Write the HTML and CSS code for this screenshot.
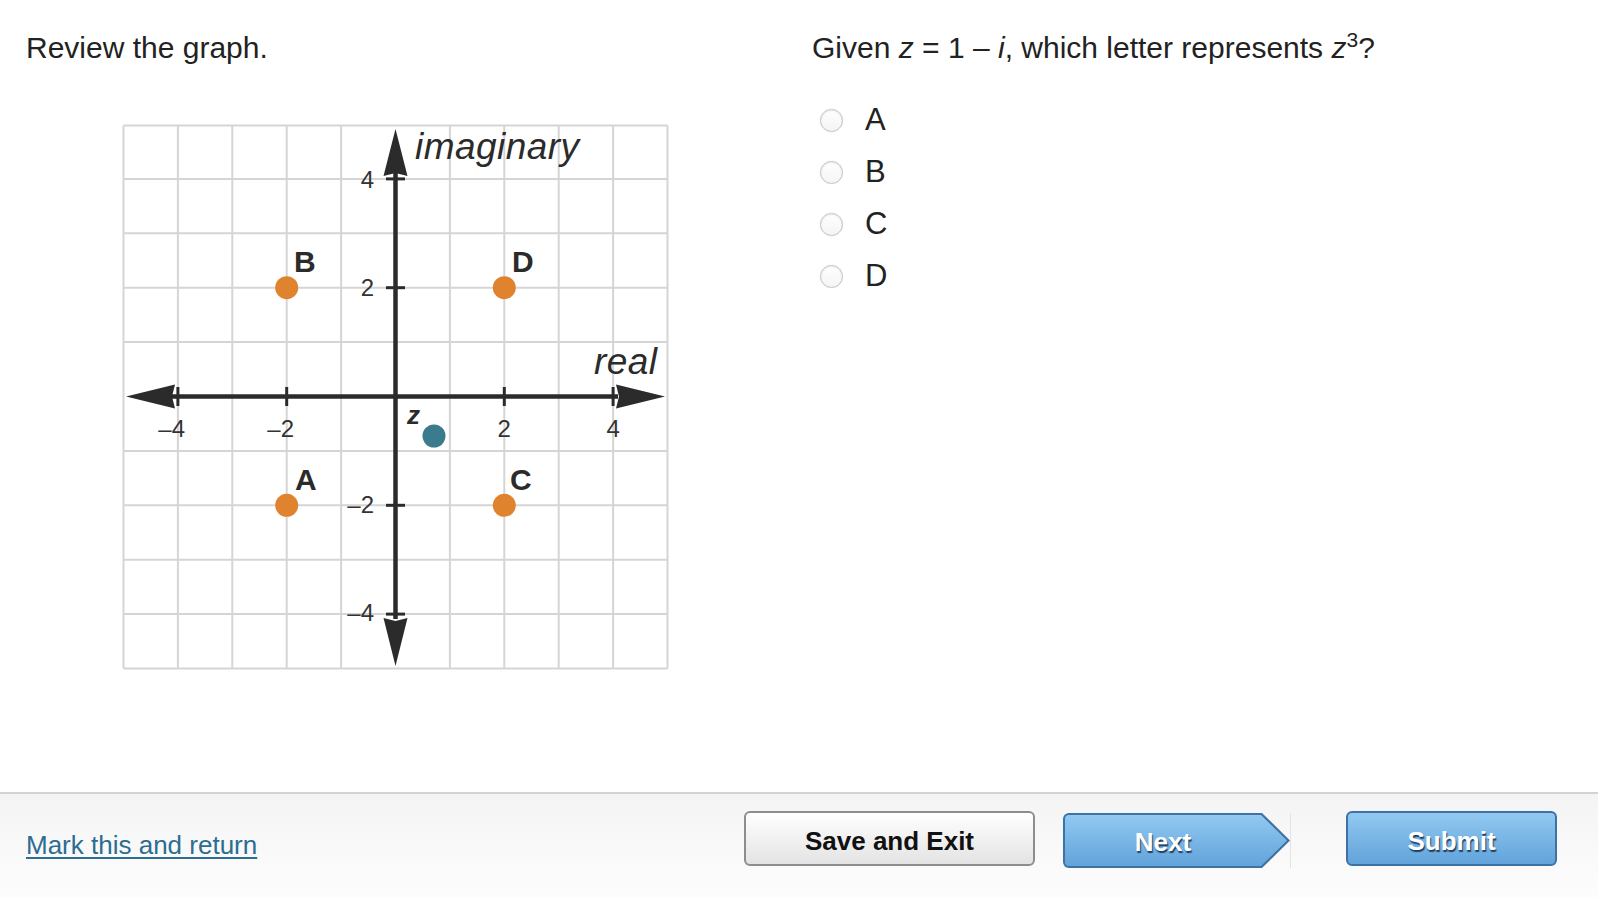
FILE: index.html
```html
<!DOCTYPE html>
<html lang="en">
<head>
<meta charset="utf-8">
<title>Review the graph</title>
<link rel="stylesheet" href="styles.css">
</head>
<body>
<div class="page">
  <main class="content">
    <section class="left">
      <p class="prompt">Review the graph.</p>
      <div class="graph">
        <svg class="graph-svg" width="548" height="548" viewBox="0 0 548 548" xmlns="http://www.w3.org/2000/svg">
          <g class="grid" stroke="#d5d5d5" stroke-width="2" fill="none">
            <line x1="1.5" y1="2.5" x2="1.5" y2="545.5"/>
            <line x1="55.9" y1="2.5" x2="55.9" y2="545.5"/>
            <line x1="110.3" y1="2.5" x2="110.3" y2="545.5"/>
            <line x1="164.7" y1="2.5" x2="164.7" y2="545.5"/>
            <line x1="219.1" y1="2.5" x2="219.1" y2="545.5"/>
            <line x1="327.9" y1="2.5" x2="327.9" y2="545.5"/>
            <line x1="382.3" y1="2.5" x2="382.3" y2="545.5"/>
            <line x1="436.7" y1="2.5" x2="436.7" y2="545.5"/>
            <line x1="491.1" y1="2.5" x2="491.1" y2="545.5"/>
            <line x1="545.5" y1="2.5" x2="545.5" y2="545.5"/>
            <line y1="2.5" x1="1.5" y2="2.5" x2="545.5"/>
            <line y1="55.9" x1="1.5" y2="55.9" x2="545.5"/>
            <line y1="110.3" x1="1.5" y2="110.3" x2="545.5"/>
            <line y1="164.7" x1="1.5" y2="164.7" x2="545.5"/>
            <line y1="219.1" x1="1.5" y2="219.1" x2="545.5"/>
            <line y1="327.9" x1="1.5" y2="327.9" x2="545.5"/>
            <line y1="382.3" x1="1.5" y2="382.3" x2="545.5"/>
            <line y1="436.7" x1="1.5" y2="436.7" x2="545.5"/>
            <line y1="491.1" x1="1.5" y2="491.1" x2="545.5"/>
            <line y1="545.5" x1="1.5" y2="545.5" x2="545.5"/>
          </g>
          <g class="axes" stroke="#2b2b2b" fill="#2b2b2b">
            <line x1="50" y1="273.5" x2="496" y2="273.5" stroke-width="4.5"/>
            <line x1="273.5" y1="50" x2="273.5" y2="496" stroke-width="4.5"/>
            <polygon stroke="none" points="4,273.5 53,261.5 50,273.5 53,285.5"/>
            <polygon stroke="none" points="543,273.5 494,261.5 497,273.5 494,285.5"/>
            <polygon stroke="none" points="273.5,6 261.5,53 273.5,50 285.5,53"/>
            <polygon stroke="none" points="273.5,543 261.5,495 273.5,498 285.5,495"/>
            <g stroke-width="3">
              <line x1="55.9" y1="264" x2="55.9" y2="283"/>
              <line x1="164.7" y1="264" x2="164.7" y2="283"/>
              <line x1="382.3" y1="264" x2="382.3" y2="283"/>
              <line x1="491.1" y1="264" x2="491.1" y2="283"/>
              <line y1="55.9" x1="264" y2="55.9" x2="283"/>
              <line y1="164.7" x1="264" y2="164.7" x2="283"/>
              <line y1="382.3" x1="264" y2="382.3" x2="283"/>
              <line y1="491.1" x1="264" y2="491.1" x2="283"/>
            </g>
          </g>
          <g class="ticks" fill="#333" font-family="Liberation Sans, Arial, sans-serif" font-size="24">
            <text x="63" y="314" text-anchor="end">–4</text>
            <text x="172" y="314" text-anchor="end">–2</text>
            <text x="382.3" y="314" text-anchor="middle">2</text>
            <text x="491.1" y="314" text-anchor="middle">4</text>
            <text x="252" y="65" text-anchor="end">4</text>
            <text x="252" y="173" text-anchor="end">2</text>
            <text x="252" y="390" text-anchor="end">–2</text>
            <text x="252" y="498" text-anchor="end">–4</text>
          </g>
          <g class="axis-names" fill="#2b2b2b" font-family="Liberation Sans, Arial, sans-serif" font-style="italic" font-size="37">
            <text x="293" y="36" textLength="164">imaginary</text>
            <text x="472" y="251" textLength="63">real</text>
          </g>
          <g class="points">
            <circle cx="164.7" cy="164.7" r="11.5" fill="#e0832f"/>
            <circle cx="382.3" cy="164.7" r="11.5" fill="#e0832f"/>
            <circle cx="164.7" cy="382.3" r="11.5" fill="#e0832f"/>
            <circle cx="382.3" cy="382.3" r="11.5" fill="#e0832f"/>
            <circle cx="312" cy="313" r="11.5" fill="#3b7b8e"/>
          </g>
          <g class="point-names" fill="#2b2b2b" font-family="Liberation Sans, Arial, sans-serif" font-weight="bold" font-size="30">
            <text x="172" y="149">B</text>
            <text x="390" y="149">D</text>
            <text x="173" y="367">A</text>
            <text x="388" y="367">C</text>
            <text x="285" y="301" font-style="italic" font-size="26">z</text>
          </g>
        </svg>
      </div>
    </section>
    <section class="right">
      <p class="question">Given <i>z</i> = 1 – <i>i</i>, which letter represents <i>z</i><sup>3</sup>?</p>
      <ul class="options">
        <li class="option"><span class="radio"></span><span class="opt-label">A</span></li>
        <li class="option"><span class="radio"></span><span class="opt-label">B</span></li>
        <li class="option"><span class="radio"></span><span class="opt-label">C</span></li>
        <li class="option"><span class="radio"></span><span class="opt-label">D</span></li>
      </ul>
    </section>
  </main>
  <footer class="footer">
    <a class="mark-link" href="#">Mark this and return</a>
    <div class="actions">
      <button class="btn btn-save" type="button">Save and Exit</button>
      <div class="next-wrap">
        <div class="btn-next"><div class="btn-next-face">Next</div></div>
      </div>
      <button class="btn btn-submit" type="button">Submit</button>
    </div>
  </footer>
</div>
</body>
</html>
```
FILE: styles.css
```css
html, body {
  margin: 0;
  padding: 0;
  background: #ffffff;
}

body {
  font-family: "Liberation Sans", Arial, Helvetica, sans-serif;
  color: #222222;
}

.page {
  width: 1598px;
  height: 898px;
  overflow: hidden;
}

.content {
  display: flex;
  height: 792px;
  box-sizing: border-box;
  padding-top: 30px;
}

.left {
  width: 812px;
  padding-left: 26px;
  box-sizing: border-box;
}

.prompt,
.question {
  margin: 0;
  font-size: 30px;
  line-height: 36px;
}

.graph {
  margin: 57px 0 0 96px;
  width: 548px;
  height: 548px;
}

.graph-svg {
  display: block;
}

.right {
  flex: 1;
}

.question i {
  font-style: italic;
}

.question sup {
  font-size: 21px;
  line-height: 0;
  vertical-align: 11px;
}

.options {
  list-style: none;
  margin: 28px 0 0 0;
  padding: 0;
}

.option {
  display: flex;
  align-items: center;
  height: 52px;
}

.radio {
  width: 23px;
  height: 23px;
  margin-left: 8px;
  box-sizing: border-box;
  border-radius: 50%;
  border: 1px solid #c4c4c4;
  background: linear-gradient(#ffffff, #f4f4f4);
  box-shadow: inset 0 1px 2px rgba(0, 0, 0, 0.08), 0 0 1px rgba(0, 0, 0, 0.15);
}

.opt-label {
  margin-left: 22px;
  font-size: 31px;
  line-height: 36px;
  color: #222;
}

.footer {
  height: 106px;
  box-sizing: border-box;
  border-top: 2px solid #d3d3d3;
  background: linear-gradient(#f4f4f4, #fdfdfd);
  display: flex;
  align-items: flex-start;
  padding: 0 41px 0 26px;
}

.mark-link {
  margin-top: 36px;
  font-size: 26px;
  line-height: 30px;
  color: #2c6d92;
  text-decoration: underline;
  text-decoration-thickness: 2px;
  text-underline-offset: 3px;
}

.actions {
  margin-left: auto;
  display: flex;
  align-items: flex-start;
  padding-top: 17px;
}

.btn {
  font-family: "Liberation Sans", Arial, Helvetica, sans-serif;
  font-weight: bold;
  font-size: 26px;
  height: 55px;
  box-sizing: border-box;
  padding: 5px 0 0 0;
  cursor: pointer;
}

.btn-save {
  width: 291px;
  border: 2px solid #8d8d8d;
  border-radius: 6px;
  background: linear-gradient(#ffffff, #e3e3e3);
  color: #111111;
}

.next-wrap {
  margin-left: 28px;
  margin-top: 2px;
  border-right: 1px solid #e3e3e3;
}

.btn-next {
  width: 227px;
  height: 55px;
  box-sizing: border-box;
  padding: 2px 0 2px 2px;
  background: #3d72a3;
  border-radius: 6px 0 0 6px;
  clip-path: polygon(0 0, calc(100% - 28px) 0, 100% 50%, calc(100% - 28px) 100%, 0 100%);
}

.btn-next-face {
  width: 222px;
  height: 100%;
  box-sizing: border-box;
  padding: 3px 26px 0 0;
  border-radius: 4px 0 0 4px;
  background: linear-gradient(#91c9f1, #62a3da);
  clip-path: polygon(0 0, calc(100% - 26px) 0, 100% 50%, calc(100% - 26px) 100%, 0 100%);
  display: flex;
  align-items: center;
  justify-content: center;
  font-weight: bold;
  font-size: 26px;
  color: #ffffff;
  text-shadow: 1px 2px 1px #1f3f63;
}

.btn-submit {
  margin-left: 55px;
  width: 211px;
  border: 2px solid #3d72a3;
  border-radius: 6px;
  background: linear-gradient(#91c9f1, #62a3da);
  color: #ffffff;
  text-shadow: 1px 2px 1px #1f3f63;
}
```
